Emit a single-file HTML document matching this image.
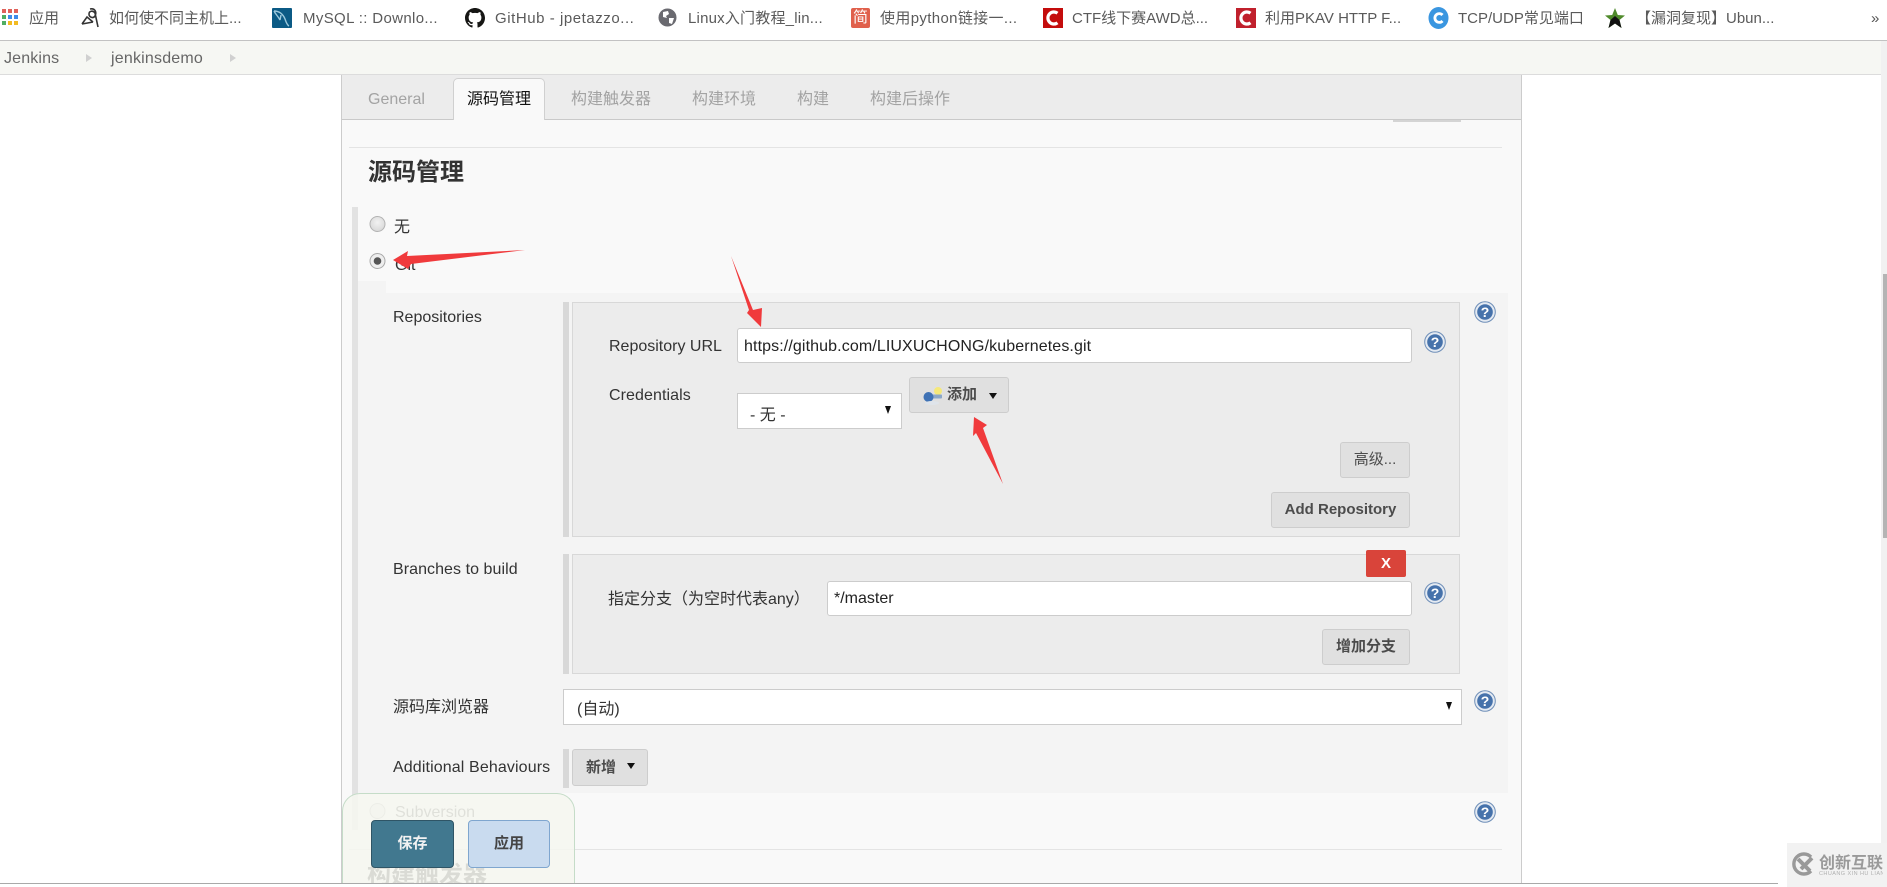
<!DOCTYPE html>
<html lang="zh"><head><meta charset="utf-8"><title>jenkinsdemo</title>
<style>
html,body{margin:0;padding:0;background:#fff;width:1887px;height:887px;overflow:hidden}
body{position:relative;font-family:"Liberation Sans","Noto Sans CJK SC",sans-serif;font-size:16px;color:#333}
.a{position:absolute;box-sizing:border-box}
.t{position:absolute;white-space:nowrap;line-height:20px;height:20px}
.bm{color:#5a5a5a;font-size:15px;top:9px}
.tab{color:#a3a3a3;top:90px}
.inp{background:#fff;border:1px solid #ccc;border-radius:3px}
.btn{background:#e0e0e0;border:1px solid #cdcdcd;border-radius:3px;font-weight:bold;font-size:15px;color:#4c4c4c;text-align:center;line-height:34px}
.bar{background:#d8d8d8}
.box{background:#ececec;border:1px solid #d8d8d8}
.tri{position:absolute;width:0;height:0;border-left:4.5px solid transparent;border-right:4.5px solid transparent;border-top:6px solid #111}
.sel{position:absolute;width:0;height:0;border-left:3.5px solid transparent;border-right:3.5px solid transparent;border-top:8px solid #111}
svg{position:absolute;overflow:visible}
</style></head><body>

<!-- bookmarks bar -->
<div class="a" style="left:0;top:0;width:1887px;height:41px;background:#fff;border-bottom:1px solid #c2c2c2"></div>
<svg style="left:2px;top:9px" width="16" height="17"><rect x="0" y="0" width="4" height="4" fill="#e0625a"/><rect x="6" y="0" width="4" height="4" fill="#e0625a"/><rect x="12" y="0" width="4" height="4" fill="#e0625a"/><rect x="0" y="6" width="4" height="4" fill="#4fae62"/><rect x="6" y="6" width="4" height="4" fill="#3f8be8"/><rect x="12" y="6" width="4" height="4" fill="#3f8be8"/><rect x="0" y="12" width="4" height="4" fill="#4fae62"/><rect x="6" y="12" width="4" height="4" fill="#f2bb22"/><rect x="12" y="12" width="4" height="4" fill="#f2bb22"/></svg>
<div class="t bm" style="left:29px">应用</div>
<svg style="left:81px;top:8px" width="19" height="20" viewBox="0 0 19 20"><path d="M1 16 L6 9 L12 14 M9 1 C14 0 16 4 14 8 C12 11 8 9 8 6 C8 3 12 2 14 5 L17 19 M1 16 L12 14" fill="none" stroke="#333" stroke-width="1.6"/></svg>
<div class="t bm" style="left:109px">如何使不同主机上...</div>
<svg style="left:272px;top:8px" width="20" height="20"><rect width="20" height="20" rx="1" fill="#0b5a85"/><path d="M2 3 C7 3 11 6 13 11 C14 14 15 17 17 18 M2 3 C4 7 6 8 8 12 M9 7 L8 12" fill="none" stroke="#9cc8dc" stroke-width="1.4"/></svg>
<div class="t bm" style="left:303px;letter-spacing:.35px">MySQL :: Downlo...</div>
<svg style="left:465px;top:8px" width="20" height="20" viewBox="0 0 16 16"><path fill="#161614" d="M8 0C3.58 0 0 3.58 0 8c0 3.54 2.29 6.53 5.47 7.59.4.07.55-.17.55-.38 0-.19-.01-.82-.01-1.49-2.01.37-2.53-.49-2.69-.94-.09-.23-.48-.94-.82-1.13-.28-.15-.68-.52-.01-.53.63-.01 1.08.58 1.23.82.72 1.21 1.87.87 2.33.66.07-.52.28-.87.51-1.07-1.78-.2-3.64-.89-3.64-3.95 0-.87.31-1.59.82-2.15-.08-.2-.36-1.02.08-2.12 0 0 .67-.21 2.2.82.64-.18 1.32-.27 2-.27s1.36.09 2 .27c1.53-1.04 2.2-.82 2.2-.82.44 1.1.16 1.92.08 2.12.51.56.82 1.27.82 2.15 0 3.07-1.87 3.75-3.65 3.95.29.25.54.73.54 1.48 0 1.07-.01 1.93-.01 2.2 0 .21.15.46.55.38A8.013 8.013 0 0016 8c0-4.42-3.58-8-8-8z"/></svg>
<div class="t bm" style="left:495px;letter-spacing:.55px">GitHub - jpetazzo...</div>
<svg style="left:658px;top:8px" width="19" height="19"><circle cx="9.5" cy="9.5" r="9" fill="#6a6a70"/><path d="M5 4 L10 3 L11 6 L8 8 L9 10 L5 9 Z M11 10 L16 10 L14 16 L11 15 Z" fill="#fff"/></svg>
<div class="t bm" style="left:688px;letter-spacing:.2px">Linux入门教程_lin...</div>
<div class="a" style="left:851px;top:8px;width:19px;height:20px;background:#e0604c;border-radius:2px;color:#fff;font-size:15px;line-height:20px;text-align:center;overflow:hidden">简</div>
<div class="t bm" style="left:880px;letter-spacing:.35px">使用python链接一...</div>
<svg style="left:1043px;top:8px" width="20" height="20"><rect width="20" height="20" fill="#c40c0c"/><path d="M14.5 5.2 A6 6 0 1 0 14.5 14.8" fill="none" stroke="#fff" stroke-width="3.2"/></svg>
<div class="t bm" style="left:1072px">CTF线下赛AWD总...</div>
<svg style="left:1236px;top:8px" width="20" height="20"><rect width="20" height="20" fill="#c0202c"/><path d="M14.5 5.2 A6 6 0 1 0 14.5 14.8" fill="none" stroke="#fff" stroke-width="3.2"/></svg>
<div class="t bm" style="left:1265px">利用PKAV HTTP F...</div>
<svg style="left:1428px;top:7px" width="21" height="22"><ellipse cx="10.5" cy="11" rx="10" ry="11" fill="#3a96e0"/><path d="M14.5 8 A4.4 4.4 0 1 0 14.5 14" fill="none" stroke="#fff" stroke-width="2.8"/></svg>
<div class="t bm" style="left:1458px">TCP/UDP常见端口</div>
<svg style="left:1605px;top:8px" width="20" height="20"><polygon points="10,0 12.8,7 20,7.5 14.5,12 16.5,20 10,15.5 3.5,20 5.5,12 0,7.5 7.2,7" fill="#4f8a2b"/><polygon points="10,8 14.5,12 16.5,20 10,15.5 3.5,20 5.5,12" fill="#111"/></svg>
<div class="t bm" style="left:1636px">【漏洞复现】Ubun...</div>
<div class="t" style="left:1871px;top:9px;font-size:15px;color:#555">»</div>

<!-- breadcrumb -->
<div class="a" style="left:0;top:41px;width:1887px;height:34px;background:#f6f7f3;border-bottom:1px solid #dcdcdc"></div>
<div class="t" style="left:4px;top:49px;color:#666;letter-spacing:.15px">Jenkins</div>
<div class="a" style="left:86px;top:54px;border-left:6px solid #d0d0d0;border-top:4.5px solid transparent;border-bottom:4.5px solid transparent"></div>
<div class="t" style="left:111px;top:49px;color:#666;letter-spacing:.2px">jenkinsdemo</div>
<div class="a" style="left:230px;top:54px;border-left:6px solid #d0d0d0;border-top:4.5px solid transparent;border-bottom:4.5px solid transparent"></div>

<!-- main panel -->
<div class="a" style="left:341px;top:75px;width:1181px;height:808px;background:#f9f9f9;border-left:1px solid #ccc;border-right:1px solid #ccc"></div>
<div class="a" style="left:342px;top:75px;width:1179px;height:45px;background:#ececec;border-bottom:1px solid #c9c9c9"></div>
<div class="a" style="left:453px;top:78px;width:92px;height:42px;background:#f9f9f9;border:1px solid #d0d0d0;border-bottom:none;border-radius:5px 5px 0 0"></div>
<div class="t tab" style="left:368px">General</div>
<div class="t" style="left:467px;top:90px;color:#111">源码管理</div>
<div class="t tab" style="left:571px">构建触发器</div>
<div class="t tab" style="left:692px">构建环境</div>
<div class="t tab" style="left:797px">构建</div>
<div class="t tab" style="left:870px">构建后操作</div>
<div class="a" style="left:1393px;top:120px;width:68px;height:2px;background:#d4d4d4"></div>
<div class="a" style="left:349px;top:147px;width:1153px;height:1px;background:#e4e4e4"></div>
<div class="t" style="left:368px;top:158px;height:30px;line-height:30px;font-size:24px;font-weight:bold;color:#333">源码管理</div>

<!-- section -->
<div class="a" style="left:352px;top:207px;width:6px;height:623px;background:#e2e2e2"></div>
<div class="a" style="left:358px;top:281px;width:28px;height:14px;background:#f4f4f4"></div>
<div class="a" style="left:358px;top:293px;width:1150px;height:500px;background:#f4f4f4"></div>

<svg style="left:369px;top:216px" width="16" height="16"><defs><radialGradient id="r1" cx="50%" cy="40%" r="60%"><stop offset="0" stop-color="#f2f2f2"/><stop offset="1" stop-color="#d8d8d8"/></radialGradient></defs><circle cx="8.5" cy="8" r="7.5" fill="url(#r1)" stroke="#b2b2b2"/></svg>
<div class="t" style="left:394px;top:218px">无</div>
<svg style="left:369px;top:253px" width="16" height="16"><circle cx="8.5" cy="8" r="7.5" fill="#eee" stroke="#a8a8a8"/><circle cx="8.5" cy="8" r="3.8" fill="#555"/></svg>
<div class="t" style="left:395px;top:256px">Git</div>

<div class="t" style="left:393px;top:308px">Repositories</div>
<div class="a bar" style="left:563px;top:302px;width:6px;height:235px"></div>
<div class="a box" style="left:572px;top:302px;width:888px;height:235px"></div>
<div class="t" style="left:609px;top:337px">Repository URL</div>
<div class="a inp" style="left:737px;top:328px;width:675px;height:35px"></div>
<div class="t" style="left:744px;top:337px;color:#222;letter-spacing:.11px">https://github.com/LIUXUCHONG/kubernetes.git</div>
<div class="t" style="left:609px;top:386px;letter-spacing:.08px">Credentials</div>
<div class="a" style="left:737px;top:393px;width:165px;height:36px;background:#fff;border:1px solid #ccc"></div>
<div class="t" style="left:750px;top:406px;color:#333">- 无 -</div>
<div class="sel" style="left:885px;top:406px"></div>
<div class="a btn" style="left:909px;top:377px;width:100px;height:36px"></div>
<svg style="left:922px;top:386px" width="22" height="20"><circle cx="16" cy="5" r="4" fill="#f5e87a"/><rect x="6" y="8.5" width="14" height="4" rx="1" fill="#8aa7c8"/><ellipse cx="6.5" cy="11" rx="5" ry="5" fill="#3f72b5"/><ellipse cx="10" cy="17" rx="7" ry="2" fill="#dfe4ea"/></svg>
<div class="t" style="left:947px;top:385px;font-size:15px;font-weight:bold;color:#4c4c4c">添加</div>
<div class="tri" style="left:989px;top:393px"></div>
<div class="a btn" style="left:1340px;top:442px;width:70px;height:36px;font-weight:normal">高级...</div>
<div class="a btn" style="left:1271px;top:492px;width:139px;height:36px">Add Repository</div>

<div class="t" style="left:393px;top:560px;letter-spacing:.06px">Branches to build</div>
<div class="a bar" style="left:563px;top:554px;width:6px;height:120px"></div>
<div class="a box" style="left:572px;top:554px;width:888px;height:120px"></div>
<div class="a" style="left:1366px;top:550px;width:40px;height:27px;background:#d9443a;border-radius:2px;color:#fff;font-weight:bold;font-size:15px;line-height:27px;text-align:center">X</div>
<div class="t" style="left:608px;top:590px">指定分支（为空时代表any）</div>
<div class="a inp" style="left:827px;top:581px;width:585px;height:35px"></div>
<div class="t" style="left:834px;top:589px;color:#222">*/master</div>
<div class="a btn" style="left:1322px;top:629px;width:88px;height:36px">增加分支</div>

<div class="t" style="left:393px;top:698px">源码库浏览器</div>
<div class="a" style="left:563px;top:689px;width:899px;height:36px;background:#fff;border:1px solid #ccc"></div>
<div class="t" style="left:577px;top:700px;color:#333">(自动)</div>
<div class="sel" style="left:1446px;top:702px"></div>

<div class="t" style="left:393px;top:758px;letter-spacing:.12px">Additional Behaviours</div>
<div class="a bar" style="left:563px;top:749px;width:6px;height:39px"></div>
<div class="a btn" style="left:572px;top:749px;width:76px;height:37px"></div>
<div class="t" style="left:586px;top:758px;font-size:15px;font-weight:bold;color:#4c4c4c">新增</div>
<div class="tri" style="left:627px;top:763px"></div>

<svg style="left:369px;top:803px" width="16" height="16"><circle cx="8.5" cy="8" r="7.5" fill="#e6e6e6" stroke="#b2b2b2"/></svg>
<div class="t" style="left:395px;top:803px;color:#555">Subversion</div>
<div class="a" style="left:349px;top:849px;width:1153px;height:1px;background:#e4e4e4"></div>
<div class="a" style="left:367px;top:861px;height:22px;overflow:hidden;width:130px"><div style="font-size:24px;font-weight:bold;line-height:30px;white-space:nowrap;color:#333">构建触发器</div></div>

<!-- help icons -->
<svg style="left:1474px;top:301px" width="22" height="22"><circle cx="11" cy="11" r="10.3" fill="#e4eaf2" stroke="#6f8fb8"/><circle cx="11" cy="11" r="7.8" fill="#4672ab"/><text x="11" y="16" font-size="14" font-weight="bold" fill="#fff" text-anchor="middle" font-family="Liberation Sans">?</text></svg>
<svg style="left:1424px;top:331px" width="22" height="22"><circle cx="11" cy="11" r="10.3" fill="#e4eaf2" stroke="#6f8fb8"/><circle cx="11" cy="11" r="7.8" fill="#4672ab"/><text x="11" y="16" font-size="14" font-weight="bold" fill="#fff" text-anchor="middle" font-family="Liberation Sans">?</text></svg>
<svg style="left:1424px;top:582px" width="22" height="22"><circle cx="11" cy="11" r="10.3" fill="#e4eaf2" stroke="#6f8fb8"/><circle cx="11" cy="11" r="7.8" fill="#4672ab"/><text x="11" y="16" font-size="14" font-weight="bold" fill="#fff" text-anchor="middle" font-family="Liberation Sans">?</text></svg>
<svg style="left:1474px;top:690px" width="22" height="22"><circle cx="11" cy="11" r="10.3" fill="#e4eaf2" stroke="#6f8fb8"/><circle cx="11" cy="11" r="7.8" fill="#4672ab"/><text x="11" y="16" font-size="14" font-weight="bold" fill="#fff" text-anchor="middle" font-family="Liberation Sans">?</text></svg>
<svg style="left:1474px;top:801px" width="22" height="22"><circle cx="11" cy="11" r="10.3" fill="#e4eaf2" stroke="#6f8fb8"/><circle cx="11" cy="11" r="7.8" fill="#4672ab"/><text x="11" y="16" font-size="14" font-weight="bold" fill="#fff" text-anchor="middle" font-family="Liberation Sans">?</text></svg>

<!-- bottom sticky -->
<div class="a" style="left:342px;top:793px;width:233px;height:90px;background:rgba(246,247,240,.86);border:1px solid #c5dcc8;border-bottom:none;border-radius:18px 18px 0 0"></div>
<div class="a" style="left:371px;top:820px;width:83px;height:48px;background:#41788f;border:1px solid #2f5566;border-radius:4px;color:#f2f2f2;font-weight:bold;font-size:15px;line-height:46px;text-align:center">保存</div>
<div class="a" style="left:468px;top:820px;width:82px;height:48px;background:#c9dbef;border:1px solid #7fa6cf;border-radius:4px;color:#444;font-weight:bold;font-size:15px;line-height:46px;text-align:center">应用</div>

<!-- bottom line and below -->
<div class="a" style="left:0;top:883px;width:1778px;height:1px;background:#a9a9a9"></div>
<div class="a" style="left:0;top:884px;width:1887px;height:3px;background:#fff"></div>

<!-- scrollbar -->
<div class="a" style="left:1881px;top:41px;width:6px;height:846px;background:#f1f1f1"></div>
<div class="a" style="left:1883px;top:274px;width:4px;height:264px;background:#b4b4b4"></div>

<!-- watermark -->
<div class="a" style="left:1787px;top:843px;width:100px;height:44px;background:#f2f2f2"></div>
<svg style="left:1790px;top:852px" width="26" height="24"><path d="M21 5 A10 10 0 1 0 21 19" fill="none" stroke="#999" stroke-width="3.4"/><path d="M8 7 L20 19 M22 6 L11 17" stroke="#999" stroke-width="4" fill="none"/></svg>
<div class="t" style="left:1819px;top:854px;font-size:16px;font-weight:bold;color:#9a9a9a">创新互联</div>
<div class="t" style="left:1819px;top:869px;width:64px;font-size:5.5px;height:10px;line-height:10px;color:#b0b0b0;letter-spacing:.45px;overflow:hidden">CHUANG XIN HU LIAN</div>

<!-- red annotation arrows -->
<svg style="left:0;top:0" width="1887" height="887">
<polygon fill="#f03a3c" points="393,260 408,251 407,256 525,250 411,264 408,269"/>
<polygon fill="#f03a3c" points="731,256 753,310 762,308 761,327 747,313 749,310"/>
<polygon fill="#f03a3c" points="974,417 987,425 983,428 1003,484 976,433 973,436"/>
</svg>

</body></html>
